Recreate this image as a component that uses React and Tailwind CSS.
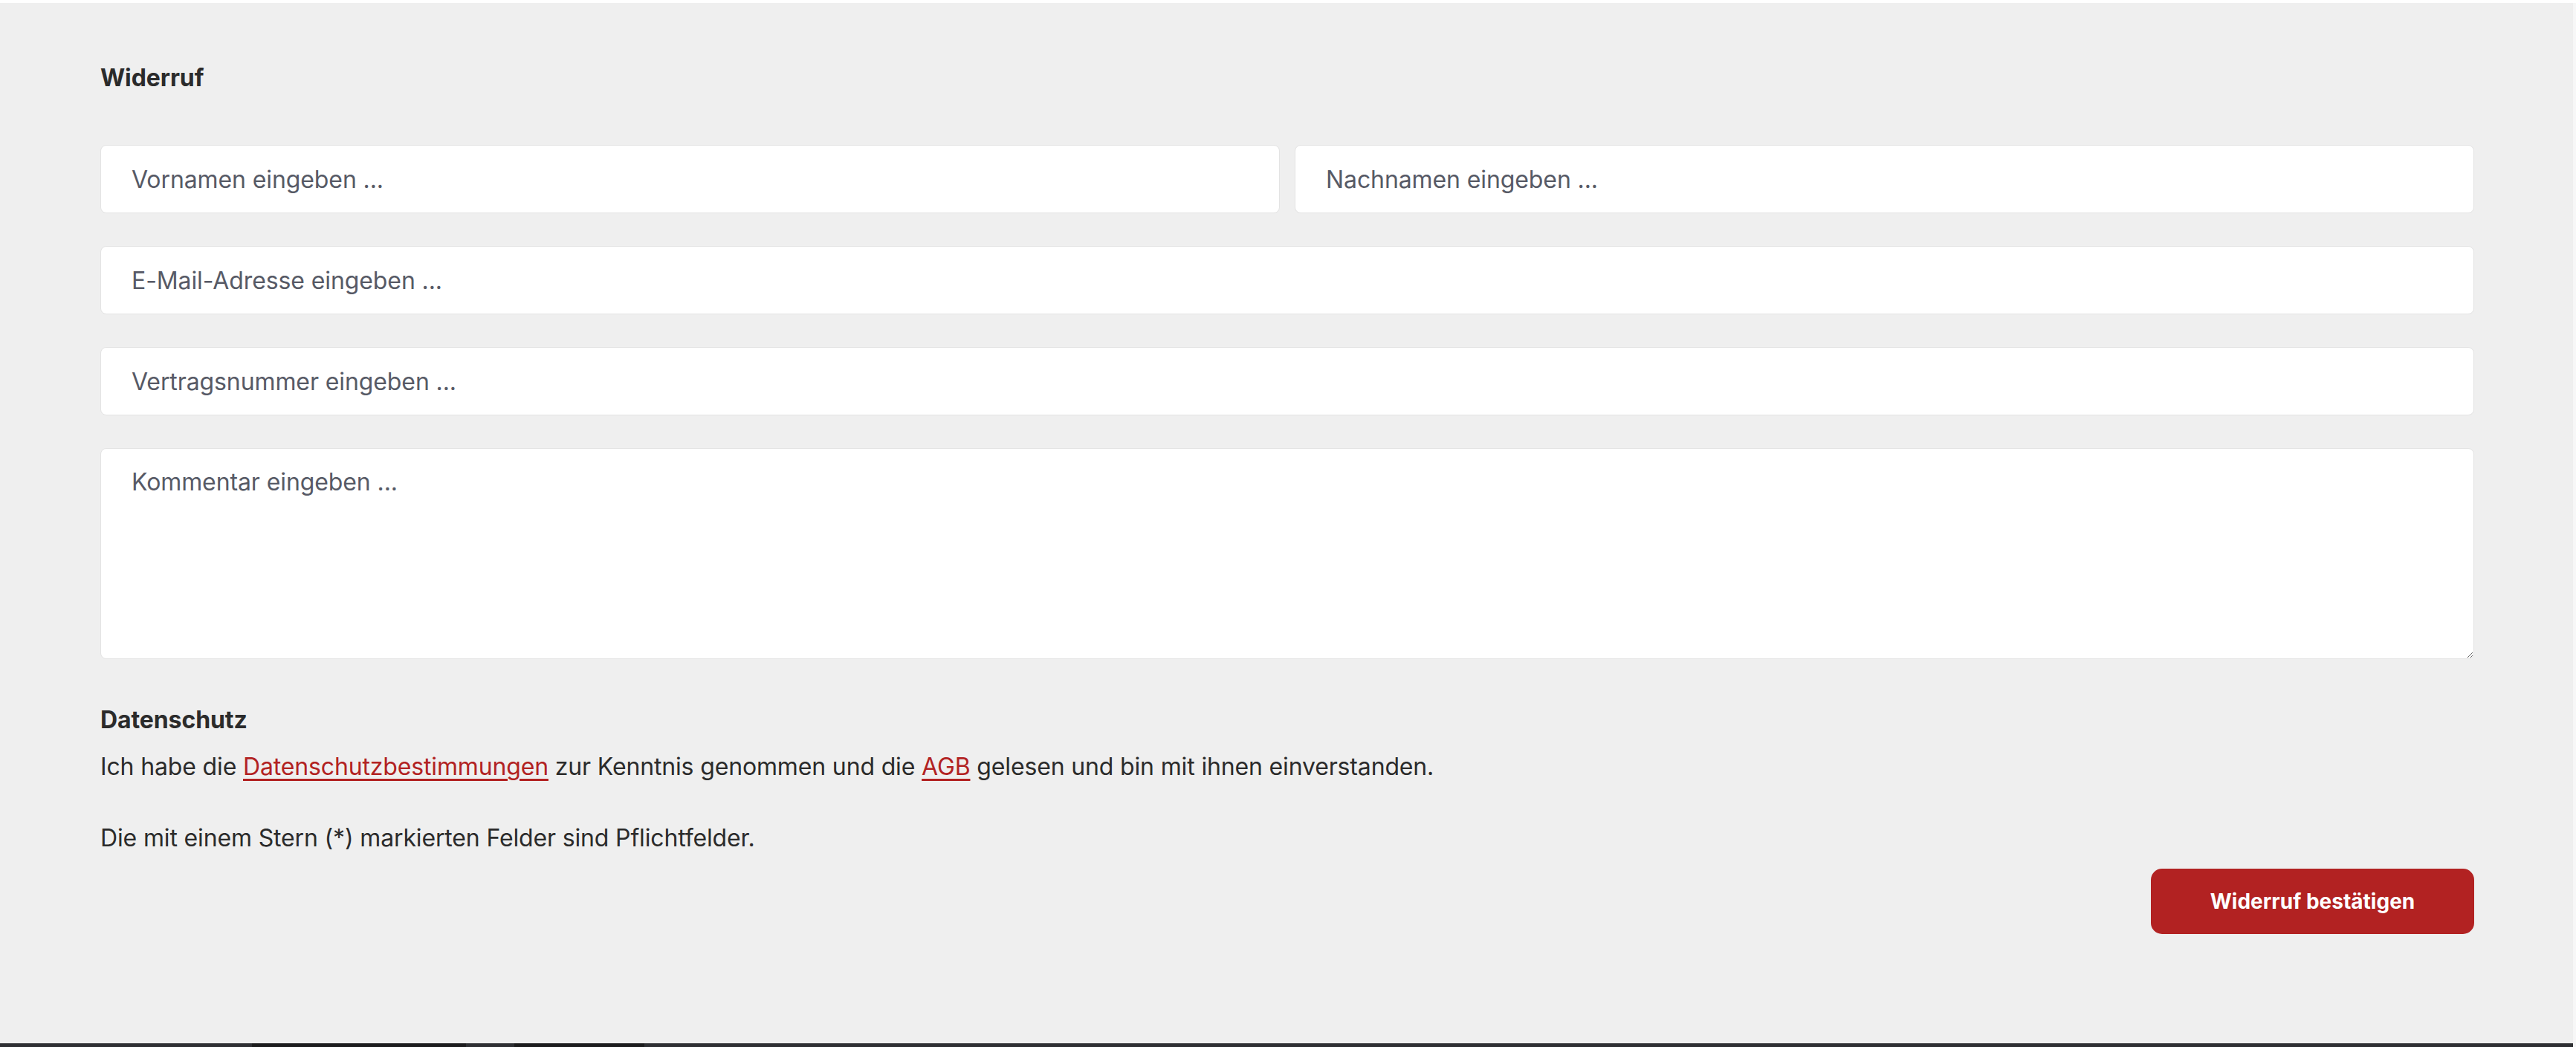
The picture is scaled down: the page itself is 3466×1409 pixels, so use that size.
import React from "react";

const fieldClass =
  "w-full h-[92px] rounded-lg border border-[#e3e3e3] bg-white px-[41px] text-[32px] leading-[40px] tracking-[-0.1px] text-[#2b2b2b] placeholder:text-[#575a66] outline-none";

export default function App() {
  return (
    <div className="w-[3466px] h-[1409px] flex flex-col bg-white font-['Inter','Noto_Sans',sans-serif] overflow-hidden">
      <div className="h-[4px] bg-white" />
      <div className="flex flex-1">
        <main className="flex-1 bg-[#efefef] pl-[135px] pr-[133px] pt-[81px] pb-0">
          <h2 className="text-[32px] leading-[40px] font-bold tracking-[-0.1px] text-[#2b2b2b]">Widerruf</h2>

          <form className="mt-[70px] flex flex-col gap-[44px]" onSubmit={(e) => e.preventDefault()}>
            <div className="grid grid-cols-2 gap-[20px]">
              <input className={fieldClass} placeholder="Vornamen eingeben ..." />
              <input className={fieldClass} placeholder="Nachnamen eingeben ..." />
            </div>
            <input className={fieldClass} placeholder="E-Mail-Adresse eingeben ..." />
            <input className={fieldClass} placeholder="Vertragsnummer eingeben ..." />
            <textarea
              className="w-full h-[284px] rounded-lg border border-[#e3e3e3] bg-white px-[41px] py-[25px] text-[32px] leading-[40px] tracking-[-0.1px] text-[#2b2b2b] placeholder:text-[#575a66] outline-none"
              placeholder="Kommentar eingeben ..."
            />
          </form>

          <h3 className="mt-[62px] text-[32px] leading-[40px] font-bold tracking-[-0.1px] text-[#2b2b2b]">Datenschutz</h3>
          <p className="mt-[19px] text-[32px] leading-[48px] tracking-[-0.15px] text-[#2b2b2b]">
            Ich habe die{" "}
            <a href="#" className="text-[#b22222] underline underline-offset-[5px] decoration-[3px]">
              Datenschutzbestimmungen
            </a>{" "}
            zur Kenntnis genommen und die{" "}
            <a href="#" className="text-[#b22222] underline underline-offset-[5px] decoration-[3px]">
              AGB
            </a>{" "}
            gelesen und bin mit ihnen einverstanden.
          </p>
          <p className="mt-[48px] text-[32px] leading-[48px] tracking-[-0.15px] text-[#2b2b2b]">
            Die mit einem Stern (*) markierten Felder sind Pflichtfelder.
          </p>

          <div className="mt-[17px] flex justify-end">
            <button className="w-[435px] h-[88px] rounded-[15px] bg-[#b22222] text-white text-[28px] font-bold">
              Widerruf bestätigen
            </button>
          </div>
        </main>
        <div className="w-[4px] bg-[#f7f7f7]" />
      </div>
      <div className="h-[5px] flex">
        <div className="w-[339px] bg-[#2e2f33]" />
        <div className="w-[288px] bg-[#1c1c1d]" />
        <div className="w-[65px] bg-[#2e2f33]" />
        <div className="w-[175px] bg-[#1c1c1d]" />
        <div className="flex-1 bg-[#2e2f33]" />
        <div className="w-[4px] bg-[#f7f7f7]" />
      </div>
    </div>
  );
}
